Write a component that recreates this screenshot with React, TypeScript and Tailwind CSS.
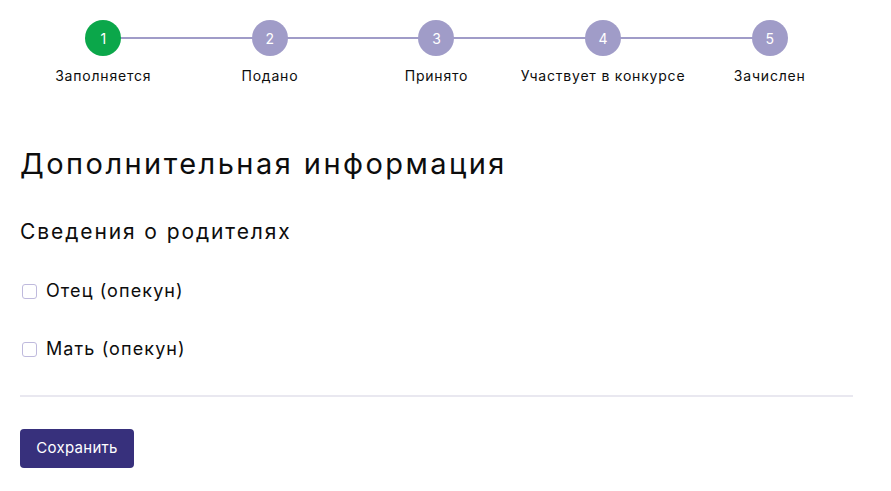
import React from "react";

const steps = ["Заполняется", "Подано", "Принято", "Участвует в конкурсе", "Зачислен"];

export default function App() {
  return (
    <div
      className="w-[891px] h-[491px] bg-white text-[#0d0d0d] overflow-hidden"
      style={{ fontFamily: "Inter, 'Noto Sans', sans-serif" }}
    >
      <div className="ml-[20px] w-[833px]">
        <div className="relative pt-[20px] grid grid-cols-5">
          <div className="absolute left-[83px] right-[83px] top-[37px] h-[2px] bg-[#a09cc8]" />
          {steps.map((s, i) => (
            <div key={s} className="relative flex flex-col items-center">
              <div
                className={
                  i === 0
                    ? "w-[36px] h-[36px] rounded-full bg-[#0ba74a] text-white flex items-center justify-center text-[14px]"
                    : "w-[36px] h-[36px] rounded-full bg-[#a09cc8] text-white flex items-center justify-center text-[14px]"
                }
              >
                {i + 1}
              </div>
              <div className="mt-[10px] text-[14px] leading-[20px] tracking-[0.8px] whitespace-nowrap">{s}</div>
            </div>
          ))}
        </div>

        <h1 className="mt-[58px] text-[29px] leading-[40px] tracking-[2.45px] font-normal">Дополнительная информация</h1>
        <h2 className="mt-[33px] text-[21px] leading-[30px] tracking-[1.9px] font-normal">Сведения о родителях</h2>

        <div className="mt-[30px] flex flex-col gap-[30px]">
          {["Отец (опекун)", "Мать (опекун)"].map((t) => (
            <label key={t} className="flex items-center h-[28px]">
              <span className="ml-[2px] w-[15px] h-[15px] rounded-[3px] border border-[#bfbadd] bg-white" />
              <span className="ml-[9px] text-[18px] leading-[28px] tracking-[1.1px]">{t}</span>
            </label>
          ))}
        </div>

        <div className="mt-[32px] h-[2px] bg-[#e9e8f0]" />

        <button className="mt-[32px] w-[114px] h-[39px] rounded-[4px] bg-[#37307c] text-white text-[15px] tracking-[0.3px]">
          Сохранить
        </button>
      </div>
    </div>
  );
}
